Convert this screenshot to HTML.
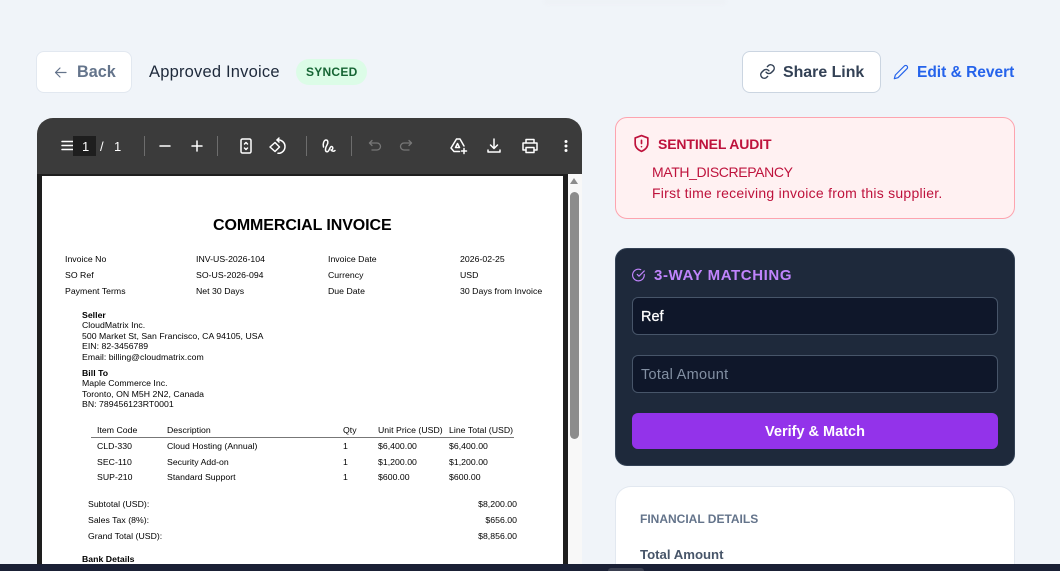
<!DOCTYPE html>
<html><head><meta charset="utf-8">
<style>
html,body{margin:0;padding:0;width:1060px;height:571px;overflow:hidden;background:#f0f4f9;font-family:"Liberation Sans",sans-serif}
#w{position:relative;width:1060px;height:571px;overflow:hidden}
.a,.t{position:absolute;box-sizing:border-box}
.t{white-space:nowrap;line-height:1}
.p{font-size:8.7px;color:#000;letter-spacing:.03px}
svg{position:absolute;overflow:visible;fill:none}
.ic{stroke:#fff;stroke-width:1.5;stroke-linecap:round;stroke-linejoin:round}
.sep{position:absolute;width:1px;height:20px;top:136px;background:#6d6d6d}
</style></head><body><div id="w">
<div class="a" style="left:545px;top:0;width:180px;height:3px;background:#eceff4;filter:blur(2px)"></div>

<div class="a" style="left:36px;top:51px;width:96px;height:42px;background:#fff;border:1px solid #e2e8f0;border-radius:8px"></div>
<svg style="left:53px;top:65px" width="15" height="15" viewBox="0 0 15 15" stroke="#64748b" stroke-width="1.2" stroke-linecap="round" stroke-linejoin="round"><path d="M13 7.500H2.500M7 3l-4.500 4.500L7 12"/></svg>
<div class="t" style="left:77px;top:64px;font-size:16.2px;font-weight:700;color:#64748b">Back</div>
<div class="t" style="left:149px;top:64px;font-size:16.5px;color:#1e293b;letter-spacing:.2px">Approved Invoice</div>
<div class="a" style="left:296px;top:59px;width:71px;height:26px;background:#dcfce7;border-radius:13px"></div>
<div class="t" style="left:306px;top:66px;font-size:12px;font-weight:700;color:#166534;letter-spacing:.25px">SYNCED</div>

<div class="a" style="left:742px;top:51px;width:139px;height:42px;background:#fff;border:1px solid #cbd5e1;border-radius:8px"></div>
<svg style="left:759px;top:63px" width="17" height="17" viewBox="0 0 24 24" stroke="#334155" stroke-width="2" stroke-linecap="round" stroke-linejoin="round"><path d="M10 13a5 5 0 0 0 7.500.5l3-3a5 5 0 0 0-7-7l-1.700 1.700"/><path d="M14 11a5 5 0 0 0-7.500-.5l-3 3a5 5 0 0 0 7 7l1.700-1.700"/></svg>
<div class="t" style="left:783px;top:65px;font-size:15.9px;font-weight:700;color:#334155">Share Link</div>
<svg style="left:893px;top:64px" width="16" height="16" viewBox="0 0 24 24" stroke="#2563eb" stroke-width="1.800" stroke-linecap="round" stroke-linejoin="round"><path d="M17 3a2.800 2.800 0 0 1 4 4L7.500 20.500 2 22l1.500-5.500z"/></svg>
<div class="t" style="left:917px;top:65px;font-size:15.5px;font-weight:700;color:#2563eb">Edit &amp; Revert</div>

<!-- PDF viewer -->
<div class="a" style="left:37px;top:118px;width:545px;height:446px;background:#fff;border-radius:16px 16px 0 0;overflow:hidden">
  <div class="a" style="left:0;top:0;width:545px;height:56px;background:#3b3b3b"></div>
  <div class="a" style="left:0;top:56px;width:531px;height:390px;background:#1e1e1e"></div>
  <div class="a" style="left:5px;top:58px;width:521px;height:388px;background:#fff"></div>
  <div class="a" style="left:531px;top:56px;width:14px;height:390px;background:#f8f8f8"></div>
  <div class="a" style="left:533px;top:74px;width:9px;height:247px;background:#8c8c8c;border-radius:5px"></div>
  <div class="a" style="left:533px;top:60px;width:0;height:0;border-left:4.500px solid transparent;border-right:4.500px solid transparent;border-bottom:6px solid #8c8c8c"></div>
</div>
<svg class="ic" style="left:62px;top:140px" width="12" height="12" viewBox="0 0 12 12" stroke-linecap="butt"><path d="M0 1.500h12M0 5.500h12M0 9.500h12"/></svg>
<div class="a" style="left:73px;top:136px;width:23px;height:20px;background:#1e1e1e"></div>
<div class="t" style="left:82px;top:140px;font-size:13px;color:#fff">1</div>
<div class="t" style="left:100px;top:140px;font-size:13px;color:#fff">/</div>
<div class="t" style="left:114px;top:140px;font-size:13px;color:#fff">1</div>
<div class="sep" style="left:144px"></div>
<svg class="ic" style="left:159px;top:140px" width="12" height="12" viewBox="0 0 12 12"><path d="M1 6h10"/></svg>
<svg class="ic" style="left:191px;top:140px" width="12" height="12" viewBox="0 0 12 12"><path d="M1 6h10M6 1v10"/></svg>
<div class="sep" style="left:217px"></div>
<svg class="ic" style="left:240px;top:138px" width="12" height="16" viewBox="0 0 12 16" stroke-width="1.200"><rect x="1" y="1" width="10" height="14" rx="1.500"/><path d="M4.500 6L6 4.500 7.500 6M4.500 10L6 11.500 7.500 10"/></svg>
<svg class="ic" style="left:269px;top:137px" width="18" height="18" viewBox="0 0 18 18" stroke-width="1.300"><path d="M8 3a6.700 6.700 0 0 1 8 6.500 6.700 6.700 0 0 1-7 6.800"/><path d="M10 1L8 3l2 2"/><path d="M6 5.500L1 10l5 4.500 4.500-4.500z"/></svg>
<div class="sep" style="left:306px"></div>
<svg class="ic" style="left:321px;top:138px" width="15" height="16" viewBox="0 0 15 16" stroke-width="1.400"><path d="M2.500 9C1.500 6 3 2 5 2 7 2 7.500 4.500 6 7 4.500 9.500 3.500 13.500 6 13.800 8.500 14 8.500 8.500 10.500 8.500 12.500 8.500 12 12.500 10 12 11 13.500 13 13.500 14 12.500"/></svg>
<div class="sep" style="left:351px"></div>
<svg style="left:368px;top:139px" width="14" height="14" viewBox="0 0 14 14" stroke="#777" stroke-width="1.300" stroke-linecap="round" stroke-linejoin="round"><path d="M4 1.500L1.500 4 4 6.500"/><path d="M1.500 4H9a3.500 3.500 0 0 1 0 7H4"/></svg>
<svg style="left:399px;top:139px" width="14" height="14" viewBox="0 0 14 14" stroke="#777" stroke-width="1.300" stroke-linecap="round" stroke-linejoin="round"><path d="M10 1.500L12.500 4 10 6.500"/><path d="M12.500 4H5a3.500 3.500 0 0 0 0 7h5"/></svg>
<svg class="ic" style="left:450px;top:137px" width="18" height="18" viewBox="0 0 18 18" stroke-width="1.300"><path d="M6.500 2h3.500L14 9M9.500 14.500H4L1 11 6.500 2"/><path d="M7.500 6.500L5.500 10.500h4z"/><path d="M14 11.500v5M11.500 14h5" stroke-width="1.500"/></svg>
<svg class="ic" style="left:487px;top:138px" width="14" height="16" viewBox="0 0 14 16"><path d="M7 1v9M3.500 7L7 10.500 10.500 7M1 12v2h12v-2"/></svg>
<svg class="ic" style="left:522px;top:138px" width="16" height="16" viewBox="0 0 16 16" stroke-width="1.400"><path d="M4 5V1.500h8V5M4 12H1V5h14v7h-3"/><rect x="4" y="9.500" width="8" height="5"/></svg>
<svg style="left:564px;top:140px" width="4" height="12" viewBox="0 0 4 12"><circle cx="2" cy="1.500" r="1.500" fill="#fff"/><circle cx="2" cy="6" r="1.500" fill="#fff"/><circle cx="2" cy="10.500" r="1.500" fill="#fff"/></svg>

<!-- PDF contents -->
<div class="t" style="left:213px;top:218px;font-size:16px;font-weight:700;color:#000;letter-spacing:-.09px">COMMERCIAL INVOICE</div>
<div class="t p" style="left:65px;top:254.500px">Invoice No</div><div class="t p" style="left:196px;top:254.500px">INV-US-2026-104</div><div class="t p" style="left:328px;top:254.500px">Invoice Date</div><div class="t p" style="left:460px;top:254.500px">2026-02-25</div>
<div class="t p" style="left:65px;top:270.500px">SO Ref</div><div class="t p" style="left:196px;top:270.500px">SO-US-2026-094</div><div class="t p" style="left:328px;top:270.500px">Currency</div><div class="t p" style="left:460px;top:270.500px">USD</div>
<div class="t p" style="left:65px;top:286.500px">Payment Terms</div><div class="t p" style="left:196px;top:286.500px">Net 30 Days</div><div class="t p" style="left:328px;top:286.500px">Due Date</div><div class="t p" style="left:460px;top:286.500px">30 Days from Invoice</div>
<div class="t p" style="left:82px;top:310.500px;font-weight:700">Seller</div>
<div class="t p" style="left:82px;top:321px">CloudMatrix Inc.</div>
<div class="t p" style="left:82px;top:331.500px">500 Market St, San Francisco, CA 94105, USA</div>
<div class="t p" style="left:82px;top:342px">EIN: 82-3456789</div>
<div class="t p" style="left:82px;top:352.500px">Email: billing@cloudmatrix.com</div>
<div class="t p" style="left:82px;top:368.500px;font-weight:700">Bill To</div>
<div class="t p" style="left:82px;top:379px">Maple Commerce Inc.</div>
<div class="t p" style="left:82px;top:389.500px">Toronto, ON M5H 2N2, Canada</div>
<div class="t p" style="left:82px;top:400px">BN: 789456123RT0001</div>
<div class="t p" style="left:97px;top:426px">Item Code</div><div class="t p" style="left:167px;top:426px">Description</div><div class="t p" style="left:343px;top:426px">Qty</div><div class="t p" style="left:378px;top:426px">Unit Price (USD)</div><div class="t p" style="left:449px;top:426px">Line Total (USD)</div>
<div class="a" style="left:91px;top:437px;width:423px;height:1px;background:#777"></div>
<div class="t p" style="left:97px;top:442px">CLD-330</div><div class="t p" style="left:167px;top:442px">Cloud Hosting (Annual)</div><div class="t p" style="left:343px;top:442px">1</div><div class="t p" style="left:378px;top:442px">$6,400.00</div><div class="t p" style="left:449px;top:442px">$6,400.00</div>
<div class="t p" style="left:97px;top:458px">SEC-110</div><div class="t p" style="left:167px;top:458px">Security Add-on</div><div class="t p" style="left:343px;top:458px">1</div><div class="t p" style="left:378px;top:458px">$1,200.00</div><div class="t p" style="left:449px;top:458px">$1,200.00</div>
<div class="t p" style="left:97px;top:473px">SUP-210</div><div class="t p" style="left:167px;top:473px">Standard Support</div><div class="t p" style="left:343px;top:473px">1</div><div class="t p" style="left:378px;top:473px">$600.00</div><div class="t p" style="left:449px;top:473px">$600.00</div>
<div class="t p" style="left:88px;top:500px">Subtotal (USD):</div><div class="t p" style="right:543px;top:500px">$8,200.00</div>
<div class="t p" style="left:88px;top:516px">Sales Tax (8%):</div><div class="t p" style="right:543px;top:516px">$656.00</div>
<div class="t p" style="left:88px;top:532px">Grand Total (USD):</div><div class="t p" style="right:543px;top:532px">$8,856.00</div>
<div class="t p" style="left:82px;top:555px;font-weight:700">Bank Details</div>

<!-- Sentinel -->
<div class="a" style="left:615px;top:117px;width:400px;height:102px;background:#fff1f2;border:1px solid #fda4af;border-radius:12px"></div>
<svg style="left:632px;top:134px" width="19" height="19" viewBox="0 0 24 24" stroke="#be123c" stroke-width="2.100" stroke-linecap="round" stroke-linejoin="round"><path d="M12 2l8 3v7c0 5-3.500 8-8 10-4.500-2-8-5-8-10V5z"/><path d="M12 8v4M12 16h.01"/></svg>
<div class="t" style="left:658px;top:137px;font-size:14px;font-weight:700;color:#be123c;letter-spacing:-.12px">SENTINEL AUDIT</div>
<div class="t" style="left:652px;top:165px;font-size:14px;color:#be123c;letter-spacing:-.37px">MATH_DISCREPANCY</div>
<div class="t" style="left:652px;top:186px;font-size:14px;color:#be123c;letter-spacing:.25px">First time receiving invoice from this supplier.</div>

<!-- Matching -->
<div class="a" style="left:615px;top:248px;width:400px;height:218px;background:#1e293b;border-radius:12px;border:1px solid #334155"></div>
<svg style="left:632px;top:268px" width="14" height="14" viewBox="0 0 24 24" stroke="#c084fc" stroke-width="2" stroke-linecap="round" stroke-linejoin="round"><path d="M21 11v1a10 10 0 1 1-6-9.100"/><path d="M9 11l3 3 9-9"/></svg>
<div class="t" style="left:654px;top:267.500px;font-size:15px;font-weight:700;color:#c084fc;letter-spacing:.6px">3-WAY MATCHING</div>
<div class="a" style="left:632px;top:297px;width:366px;height:38px;background:#0f172a;border:1px solid #475569;border-radius:6px"></div>
<div class="t" style="left:641px;top:310px;font-size:14.500px;color:#fff;-webkit-text-stroke:.25px #fff">Ref</div>
<div class="a" style="left:632px;top:355px;width:366px;height:38px;background:#0f172a;border:1px solid #475569;border-radius:6px"></div>
<div class="t" style="left:641px;top:368px;font-size:14.500px;color:#8390a3;letter-spacing:.3px">Total Amount</div>
<div class="a" style="left:632px;top:413px;width:366px;height:36px;background:#9333ea;border-radius:6px"></div>
<div class="t" style="left:632px;width:366px;text-align:center;top:424.500px;font-size:14.500px;font-weight:700;color:#fff">Verify &amp; Match</div>

<!-- Financial -->
<div class="a" style="left:615px;top:486px;width:400px;height:78px;background:#fff;border:1px solid #e2e8f0;border-bottom:0;border-radius:16px 16px 0 0"></div>
<div class="t" style="left:640px;top:513px;font-size:12px;font-weight:700;color:#64748b;letter-spacing:0">FINANCIAL DETAILS</div>
<div class="t" style="left:640px;top:548px;font-size:13.200px;font-weight:700;color:#475569">Total Amount</div>

<!-- Bottom bar -->
<div class="a" style="left:0;top:564px;width:1060px;height:7px;background:#1a2035"></div>
<div class="a" style="left:608px;top:568px;width:36px;height:3px;background:#3a3f50;border-radius:3px 3px 0 0"></div>
</div></body></html>
